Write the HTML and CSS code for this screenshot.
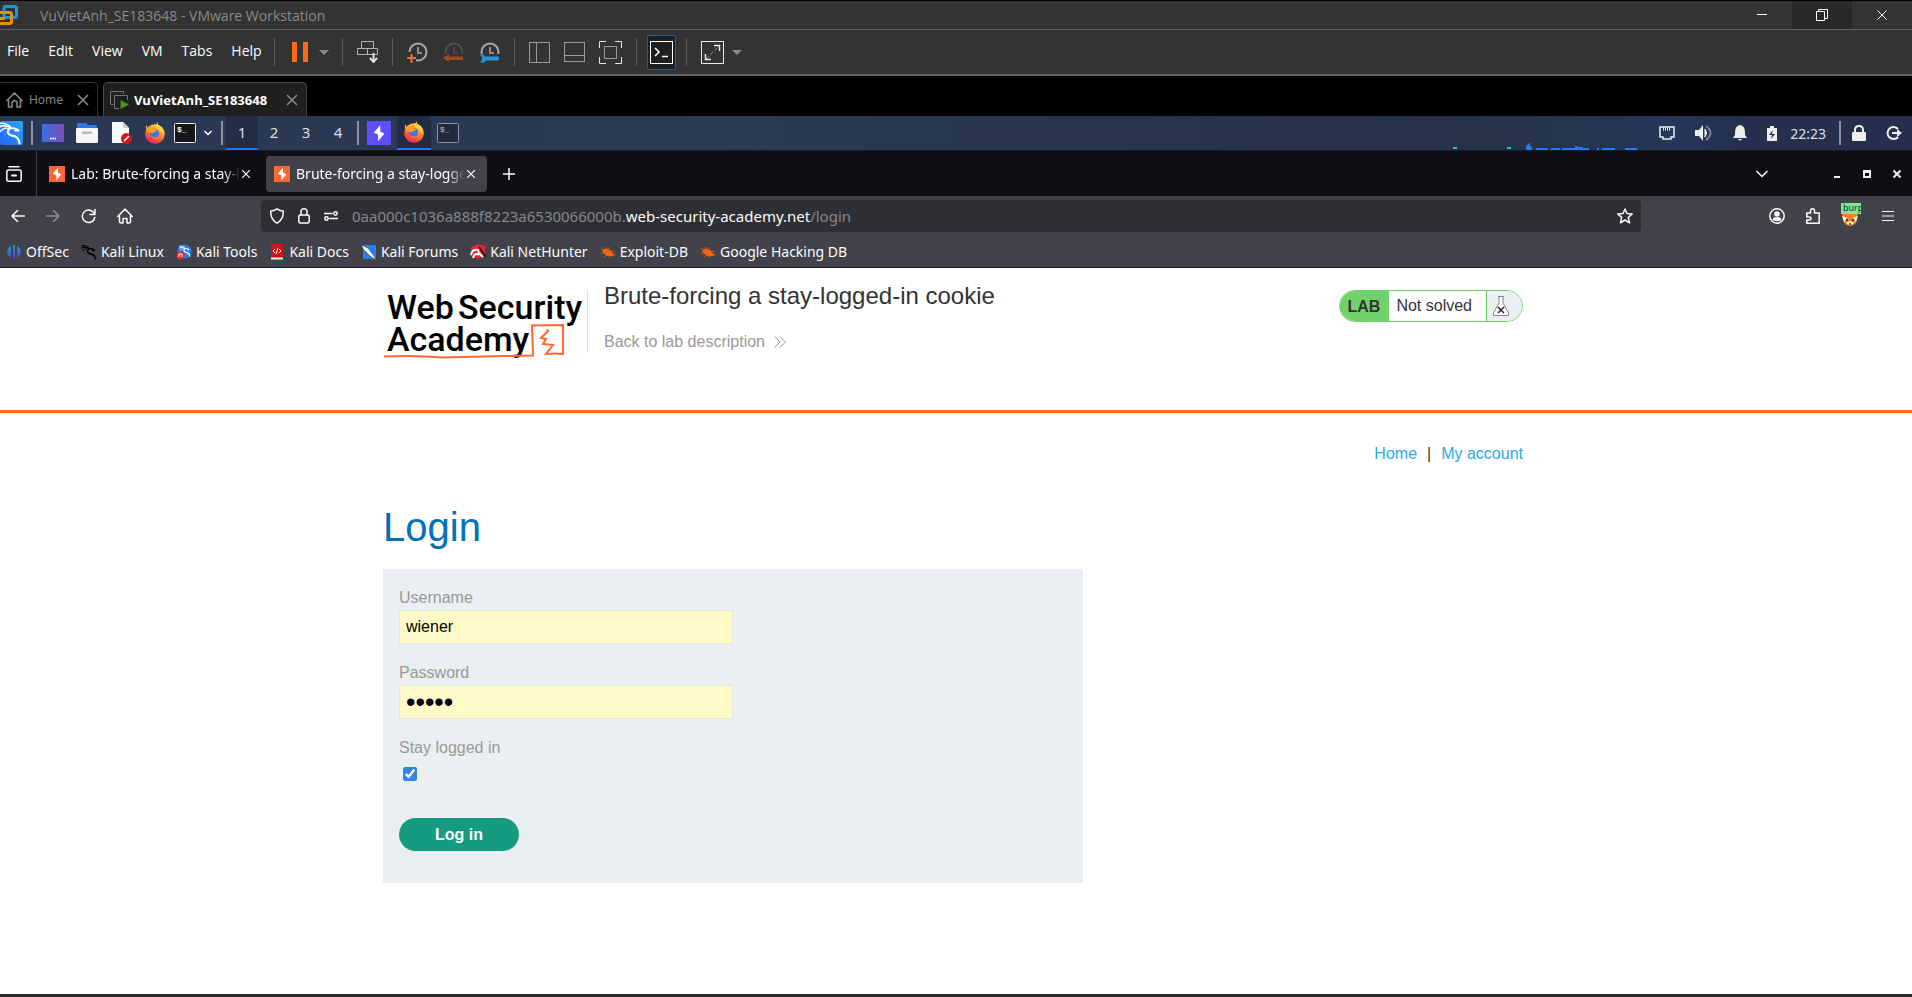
FILE: index.html
```html
<!DOCTYPE html>
<html lang="en">

<head>
    <meta charset="UTF-8">
    <meta name="viewport" content="width=device-width, initial-scale=1.0">
    <title>Brute-forcing a stay-logged-in cookie</title>
    <link rel="stylesheet" href="styles.css">
</head>

<body>
    <!-- Shared icons -->
    <svg class="defs" width="0" height="0" aria-hidden="true">
        <defs>
            <linearGradient id="fox-body" x1="0.8" y1="0" x2="0.3" y2="1">
                <stop offset="0" stop-color="#fff04f" />
                <stop offset="0.4" stop-color="#ff9a2e" />
                <stop offset="0.75" stop-color="#ff4a3c" />
                <stop offset="1" stop-color="#e8236b" />
            </linearGradient>
            <linearGradient id="desk" x1="0" y1="0" x2="1" y2="0">
                <stop offset="0" stop-color="#3a6fe6" />
                <stop offset="1" stop-color="#7b4fb5" />
            </linearGradient>
            <linearGradient id="kali-bg" x1="0" y1="1" x2="1" y2="0">
                <stop offset="0" stop-color="#2767f4" />
                <stop offset="1" stop-color="#25a7ff" />
            </linearGradient>
            <linearGradient id="offsec" x1="0" y1="0" x2="0" y2="1">
                <stop offset="0" stop-color="#12a5b4" />
                <stop offset="1" stop-color="#5a35d6" />
            </linearGradient>
        </defs>
        <symbol id="i-dragon" viewBox="0 0 24 24">
            <g fill="none" stroke="currentColor" stroke-linecap="round" stroke-linejoin="round">
                <path d="M1 2.500C6 1.500 10 3 13 6.500" stroke-width="1.500" />
                <path d="M1 6C5 4 10 4.500 13.500 7.500C16 6.500 18.500 7.500 20.500 9.500L17 9.500" stroke-width="1.800" />
                <path d="M2 10.500C5 7 9 6.500 11.500 8" stroke-width="1.300" />
                <path d="M11.500 7.500C8.500 10.500 10 14 13.500 14.500C18 15.200 21.500 16.500 21.500 22.500" stroke-width="2.200" />
                <path d="M14 14.500C17.500 15 19.500 17 20 19" stroke-width="1.500" />
            </g>
        </symbol>
        <symbol id="i-firefox" viewBox="0 0 22 22">
            <circle cx="11" cy="12" r="9.800" fill="url(#fox-body)" />
            <path d="M14 0C12.500 5 19 6 20.500 12C17 8 15 8 12.500 6C11.500 4 12 2 14 0Z" fill="#ffd43e" />
            <circle cx="10.500" cy="11.500" r="4.700" fill="#4a73e8" />
            <path d="M2 3L4 6C5 5 7 4.800 8 5L11 3.500L10.500 6.500L13 8C13 10 9.500 9.500 9 11C7 12 6 9.500 3.500 10C2 8 1.500 6 2 3Z" fill="#ff9d1e" />
            <path d="M6 12C7 16 13 17 16 13C15 18 8 19 6 12Z" fill="#ff7a33" />
        </symbol>
        <symbol id="i-bolt" viewBox="0 0 16 16">
            <path d="M9 1.500L3.800 7.800L7.300 9.200V14.500L12.300 8.300L9 6.800Z" fill="#fff" />
        </symbol>
        <symbol id="i-burp" viewBox="0 0 16 16">
            <rect width="16" height="16" fill="#ff6633" />
            <path d="M9 1.500L3.800 7.800L7.300 9.200V14.500L12.300 8.300L9 6.800Z" fill="#fff" />
        </symbol>
        <symbol id="i-x" viewBox="0 0 12 12">
            <path d="M1 1L11 11M11 1L1 11" fill="none" stroke="currentColor" stroke-width="1.500" />
        </symbol>
        <symbol id="i-bug" viewBox="0 0 16 16">
            <path d="M2 6C6 3 12 5 14 12C9 13 4 12 2 6Z" fill="#f26411" />
            <path d="M1 4L4 6M5 3L6 5M8 3L9 5M1 9L4 9M4 13L7 11M12 7L15 8M9 14L10 12M13 10L16 11" stroke="#c9541a" fill="none" />
        </symbol>
        <symbol id="i-clock" viewBox="0 0 21 21">
            <circle cx="11" cy="10" r="8.500" fill="none" stroke="currentColor" stroke-width="2" />
            <path d="M11 5V11H15" fill="none" stroke="currentColor" stroke-width="1.500" />
        </symbol>
    </svg>

    <div class="screen">
        <!-- VMware window -->
        <header class="vm-title">
            <svg class="vm-logo" width="18" height="20" viewBox="0 0 18 20">
                <rect x="4" y="1.500" width="12.500" height="11" rx="2" fill="none" stroke="#1d95d3" stroke-width="3" />
                <path d="M0 7.500H9.500Q11.500 7.500 11.500 9.500V16.500Q11.500 18.500 9.500 18.500H0M0 13.500H5" fill="none" stroke="#f38b00" stroke-width="3" />
            </svg>
            <span class="vm-name">VuVietAnh_SE183648 - VMware Workstation</span>
            <button class="win-btn" aria-label="Minimize"><svg width="10" height="10"><path d="M0 4.500H10" stroke="#fff" /></svg></button>
            <button class="win-btn dark" aria-label="Restore"><svg width="12" height="12" fill="none" stroke="#fff"><path d="M0.500 2.500H8.500V11.500H0.500ZM2.500 2.500V0.500H11.500V9.500H8.500" /></svg></button>
            <button class="win-btn" aria-label="Close"><svg width="10" height="10"><path d="M0.500 0.500L9.500 9.500M9.500 0.500L0.500 9.500" stroke="#fff" /></svg></button>
        </header>

        <div class="vm-menu">
            <nav class="menus">
                <button>File</button><button>Edit</button><button>View</button><button>VM</button><button>Tabs</button><button>Help</button>
            </nav>
            <div class="tool-group power">
                <button aria-label="Suspend"><svg width="16" height="20"><path d="M0 0H5V20H0ZM11 0H16V20H11Z" fill="#ff6a13" /></svg></button>
                <button aria-label="Power options"><svg width="10" height="5"><path d="M0 0H10L5 5Z" fill="#8a8a8a" /></svg></button>
            </div>
            <div class="tool-group">
                <button aria-label="Send Ctrl+Alt+Del"><svg width="21" height="22" fill="none" stroke="#b4b4b4"><path d="M4.500 7.500V0.500H16.500V7.500M0.500 7.500H20.500V13.500H0.500ZM10.500 7.500V13.500" /><path d="M16.500 12V20M13 17L16.500 21L20 17" stroke="#ddd" stroke-width="2" /></svg></button>
            </div>
            <div class="tool-group clocks">
                <button class="clock" aria-label="Take snapshot"><svg width="21" height="21"><use href="#i-clock" /><path d="M0 10H5V13H9V21H0Z" fill="#333" /><path d="M0 16H9M4.500 12V21" stroke="#e8703a" stroke-width="2" /></svg></button>
                <button class="clock dim" aria-label="Revert snapshot"><svg width="21" height="21"><use href="#i-clock" /><rect y="12" width="21" height="9" fill="#333" /><path d="M0 16L6 12V14.500H20V18H6V20Z" fill="#a34a22" /></svg></button>
                <button class="clock" aria-label="Manage snapshots"><svg width="21" height="21"><use href="#i-clock" /><rect y="12" width="21" height="9" fill="#333" /><path d="M0 12.500H4L6 14.500H19Q21 16.500 19 18.500H7L5 20.500H0L3 18.500V15Z" fill="#2794dc" /></svg></button>
            </div>
            <div class="tool-group">
                <button aria-label="Show library"><svg width="21" height="21" fill="none" stroke="#9a9a9a"><rect x="0.500" y="0.500" width="20" height="20" /><path d="M7.500 0V21" /></svg></button>
                <button aria-label="Thumbnail bar"><svg width="21" height="20" fill="none" stroke="#9a9a9a"><rect x="0.500" y="0.500" width="20" height="19" /><path d="M0 13.500H21" /></svg></button>
                <button aria-label="Stretch guest"><svg width="23" height="23" fill="none" stroke="#e8e8e8"><path d="M0.500 7V0.500H7M16 0.500H22.500V7M22.500 16V22.500H16M7 22.500H0.500V16" /><rect x="5.500" y="5.500" width="12" height="12" stroke="#999" /></svg></button>
            </div>
            <div class="tool-group tight">
                <button class="pressed" aria-label="Console view"><svg width="23" height="23" fill="none" stroke="#fff"><rect x="0.500" y="0.500" width="22" height="22" /><path d="M5 7L9 11L5 15M12 15.500H18" stroke-width="1.500" /></svg></button>
            </div>
            <div class="tool-group last">
                <button aria-label="Full screen"><svg width="23" height="23" fill="none" stroke="#e8e8e8"><rect x="0.500" y="0.500" width="22" height="22" /><path d="M5 18L18 5" stroke="#999" stroke-dasharray="4 2" /><path d="M13 4.500H18.500V10M4.500 13V18.500H10" stroke-width="1.500" /></svg></button>
                <button aria-label="Full screen options"><svg width="10" height="5"><path d="M0 0H10L5 5Z" fill="#8a8a8a" /></svg></button>
            </div>
        </div>

        <div class="vm-tabs">
            <div class="vm-tab home">
                <svg width="17" height="16" viewBox="0 0 17 16" fill="none" stroke="#8c8c8c" stroke-width="1.500"><path d="M0.500 9L8.500 1L16.500 9M2.500 8V15H6V10Q8.500 7 11 10V15H14.500V8" /></svg>
                <span>Home</span>
                <button aria-label="Close Home"><svg width="12" height="12"><use href="#i-x" /></svg></button>
            </div>
            <div class="vm-tab current">
                <svg width="19" height="18" viewBox="0 0 19 18" fill="none" stroke="#777"><path d="M3.500 13.500H0.500V0.500H13.500V3M9 17.500H4.500V4.500H17.500V9" /><path d="M10.500 9L19 13.500L10.500 18Z" fill="#3f9a12" stroke="none" /></svg>
                <span>VuVietAnh_SE183648</span>
                <button aria-label="Close VuVietAnh_SE183648"><svg width="12" height="12"><use href="#i-x" /></svg></button>
            </div>
        </div>

        <!-- Kali panel -->
        <div class="panel">
            <button class="kali" aria-label="Applications"><svg width="24" height="24"><rect width="23" height="24" rx="2" fill="url(#kali-bg)" /><use href="#i-dragon" x="-2" width="24" height="24" /></svg></button>
            <i class="bar"></i>
            <div class="launchers">
                <button aria-label="Show desktop"><svg width="22" height="18"><rect width="22" height="18" rx="1" fill="url(#desk)" /><path d="M8 14.500H10M10.500 14.500H12.500M13 14.500H14" stroke="#fff" stroke-width="1.500" /></svg></button>
                <button aria-label="Files"><svg width="22" height="20"><path d="M1 0H10L12 2H21V8H1Z" fill="#2f74ea" /><rect y="5" width="22" height="15" rx="1" fill="#f6f6f6" /><rect x="6" y="8.500" width="10" height="2.500" rx="1" fill="#b9b9b9" /></svg></button>
                <button aria-label="Text editor"><svg width="22" height="22"><path d="M2 0H13L19 6V21H2Z" fill="#f8f8f8" /><path d="M13 0V6H19Z" fill="#ccc" /><circle cx="16.500" cy="16.500" r="5.500" fill="#d3151c" /><path d="M14 19L19 14" stroke="#fff" stroke-width="1.500" /></svg></button>
                <button aria-label="Firefox"><svg width="22" height="22"><use href="#i-firefox" /></svg></button>
            </div>
            <div class="term-menu">
                <button aria-label="Terminal"><svg width="22" height="20"><rect x="0.500" y="0.500" width="21" height="19" rx="1" fill="#171717" stroke="#eee" /><text x="3" y="9" class="prompt">$_</text></svg></button>
                <button aria-label="More terminals"><svg width="8" height="6"><path d="M0.500 1L4 4.500L7.500 1" fill="none" stroke="#fff" stroke-width="1.500" /></svg></button>
            </div>
            <i class="bar"></i>
            <div class="spaces">
                <button class="on">1</button><button>2</button><button>3</button><button>4</button>
            </div>
            <i class="bar"></i>
            <div class="tasks">
                <button aria-label="Burp Suite"><svg width="24" height="24"><rect width="24" height="24" fill="#5f50ff" /><use href="#i-bolt" x="2" y="2" width="20" height="20" /></svg></button>
                <button class="on" aria-label="Firefox window"><svg width="22" height="22"><use href="#i-firefox" /></svg></button>
                <button aria-label="Terminal window"><svg width="22" height="20"><rect x="0.500" y="0.500" width="21" height="19" rx="1" fill="#222a3c" stroke="#8d93a0" /><text x="3" y="9" class="prompt faded">$_</text></svg></button>
            </div>
            <svg class="wallpaper" width="187" height="7"><path d="M0 4H4V6H0ZM54 4H58V6H54Z" fill="#17c9c0" /><path d="M73 7V3L75 1L77 0V3L79 4V7ZM83 5H95V7H83ZM98 5H107V7H98ZM109 5H122V3H125V4H130V5H136V7H109ZM144 5H146V7H144ZM149 5H162V7H149ZM172 5H184V7H172Z" fill="#2478f5" /></svg>
            <div class="tray">
                <button aria-label="Network"><svg width="16" height="14" fill="none" stroke="#eee"><path d="M1 1H15V11H12V13H4V11H1Z" stroke-width="1.500" /><path d="M4 3H12" stroke-dasharray="1 1" stroke-width="3" /></svg></button>
                <button aria-label="Volume"><svg width="18" height="16"><path d="M0 5H4L8 0V16L4 11H0Z" fill="#eee" /><path d="M10 4Q13 8 10 12Z" fill="#eee" stroke="#eee" /><path d="M11 1Q20 8 11 15" fill="none" stroke="#76809a" stroke-width="2" /></svg></button>
                <button aria-label="Notifications"><svg width="14" height="16"><path d="M7 0Q12 1 12 7V10L14 13H0L2 10V7Q2 1 7 0ZM5 14H9Q7 17 5 14Z" fill="#eee" /></svg></button>
                <button aria-label="Battery"><svg width="10" height="15"><path d="M0 2H3V0H7V2H10V15H0Z" fill="#eee" /><path d="M6 4L2 9H5L4 13L8 8H5Z" fill="#26314d" /></svg></button>
                <time>22:23</time>
                <i class="bar"></i>
                <button aria-label="Lock screen"><svg width="14" height="16"><rect y="7" width="14" height="9" rx="1" fill="#eee" /><path d="M3 8V5Q3 1 7 1Q11 1 11 5V8" fill="none" stroke="#eee" stroke-width="2" /></svg></button>
                <button aria-label="Log out"><svg width="16" height="14"><path d="M12 3A6 6 0 1 0 12 11" fill="none" stroke="#eee" stroke-width="2" /><path d="M6 6H11V3L16 7L11 11V8H6Z" fill="#eee" /></svg></button>
            </div>
        </div>

        <!-- Browser chrome -->
        <div class="tabstrip">
            <button class="view" aria-label="Firefox View"><svg width="16" height="16" fill="none" stroke="#fbfbfe" stroke-width="1.500" stroke-linecap="round"><path d="M3 0.800H13" /><rect x="0.800" y="4" width="14.400" height="11.200" rx="2" /><path d="M6 9.500H10" stroke-width="2" /></svg></button>
            <div class="tab">
                <svg width="16" height="16"><use href="#i-burp" /></svg>
                <span class="tab-text">Lab: Brute-forcing a stay-logged-in cookie</span>
                <button aria-label="Close tab"><svg width="8" height="8" viewBox="1 1 10 10"><use href="#i-x" width="12" height="12" /></svg></button>
            </div>
            <div class="tab selected">
                <svg width="16" height="16"><use href="#i-burp" /></svg>
                <span class="tab-text">Brute-forcing a stay-logged-in cookie</span>
                <button aria-label="Close tab"><svg width="8" height="8" viewBox="1 1 10 10"><use href="#i-x" width="12" height="12" /></svg></button>
            </div>
            <button class="new-tab" aria-label="New tab"><svg width="12" height="12"><path d="M6 0V12M0 6H12" stroke="#fbfbfe" stroke-width="1.500" /></svg></button>
            <div class="strip-end">
                <button class="all-tabs" aria-label="List all tabs"><svg width="12" height="8"><path d="M0.500 1L6 6.500L11.500 1" fill="none" stroke="#fbfbfe" stroke-width="1.500" /></svg></button>
                <button aria-label="Minimize"><svg width="8" height="8"><path d="M1 7H7" stroke="#eee" stroke-width="2" /></svg></button>
                <button aria-label="Maximize"><svg width="8" height="8"><path d="M1 1H7V7H1Z" fill="none" stroke="#eee" stroke-width="2" /><path d="M0 2H8" stroke="#eee" stroke-width="2" /></svg></button>
                <button aria-label="Close"><svg width="8" height="8"><path d="M0.500 0.500L7.500 7.500M7.500 0.500L0.500 7.500" stroke="#eee" stroke-width="2" /></svg></button>
            </div>
        </div>

        <div class="navbar">
            <div class="nav-left">
                <button aria-label="Back"><svg width="14" height="12" class="line"><path d="M14 6H1M6.500 0.500L1 6L6.500 11.500" /></svg></button>
                <button aria-label="Forward" class="off"><svg width="14" height="12" class="line"><path d="M0 6H13M7.500 0.500L13 6L7.500 11.500" /></svg></button>
                <button aria-label="Reload"><svg width="15" height="15" class="line"><path d="M13.500 5A6.300 6.300 0 1 0 13.800 8.500M14 0.500V5.500H9" /></svg></button>
                <button aria-label="Home page"><svg width="16" height="16" class="line"><path d="M0.800 8.500L8 1L15.200 8.500M2.500 7.500V13.500Q2.500 15 4 15H6V10.500H10V15H12Q13.500 15 13.500 13.500V7.500" /></svg></button>
            </div>
            <div class="urlbar">
                <svg width="14" height="16" class="line"><path d="M7 0.800Q10 2.800 13.200 3Q13.800 11.500 7 15.200Q0.200 11.500 0.800 3Q4 2.800 7 0.800Z" /></svg>
                <svg width="12" height="16" class="line"><rect x="0.800" y="7" width="10.400" height="8" rx="1.500" /><path d="M3 7V4Q3 0.800 6 0.800Q9 0.800 9 4V7" /></svg>
                <svg width="14" height="10" class="line"><path d="M0 2.500H8M6 7.500H14" /><circle cx="11.500" cy="2.500" r="1.700" /><circle cx="2.500" cy="7.500" r="1.700" /></svg>
                <div class="url" role="textbox" contenteditable="true" spellcheck="false" aria-label="Address">0aa000c1036a888f8223a6530066000b.<b>web-security-academy.net</b>/login</div>
                <button aria-label="Bookmark this page"><svg width="16" height="16" class="line"><path d="M8 1L10 5.500L15.200 6L11.300 9.400L12.500 14.800L8 12L3.500 14.800L4.700 9.400L0.800 6L6 5.500Z" /></svg></button>
            </div>
            <div class="nav-right">
                <button aria-label="Account"><svg width="16" height="16" class="line"><circle cx="8" cy="8" r="7.200" /><circle cx="8" cy="6" r="2" fill="#fbfbfe" /><path d="M4.500 11.500Q4.500 10 6 10H10Q11.500 10 11.500 11.500Q8 13.500 4.500 11.500Z" fill="#fbfbfe" /></svg></button>
                <button aria-label="Extensions"><svg width="14" height="16" class="line"><path d="M0.800 15.200V12H3Q5 12 5 10.500Q5 9 3 9H0.800V5H4.500V3Q4.500 0.800 6.500 0.800Q8.500 0.800 8.500 3V5H13.200V15.200Z" /></svg></button>
                <button class="proxy" aria-label="FoxyProxy: burp"><svg width="20" height="22"><path d="M1 9H17L15 18Q9 24 3 18Z" fill="#f0861a" /><path d="M3 17L1 11L6 13ZM15 17L17 11L12 13ZM5 18Q9 22 13 18L9 16Z" fill="#fff3dc" /><path d="M5 15H7M11 15H13M8 19H10" stroke="#222" stroke-width="1.500" /></svg><span>burp</span></button>
                <button aria-label="Menu"><svg width="12" height="12"><path d="M0 1.500H12M0 6H12M0 10.500H12" stroke="#fbfbfe" stroke-width="1.200" /></svg></button>
            </div>
        </div>

        <nav class="bookmarks">
            <a href="#"><svg width="16" height="16"><path d="M5 2V14Q1 12 1 8Q1 4 5 2ZM7 1H9V15H7ZM11 2V14Q15 12 15 8Q15 4 11 2Z" fill="url(#offsec)" /></svg>OffSec</a>
            <a href="#"><svg width="16" height="16" class="black"><use href="#i-dragon" /></svg>Kali Linux</a>
            <a href="#"><svg width="16" height="16" class="white"><circle cx="8.500" cy="7.500" r="7" fill="#2a7bf0" /><use href="#i-dragon" x="3" y="1" width="12" height="12" /><circle cx="4.500" cy="11.500" r="4" fill="#e3282d" /><path d="M3 13V10H6V13" fill="none" stroke="#fff" /></svg>Kali Tools</a>
            <a href="#"><svg width="16" height="16"><path d="M2 0H14V16H2Z" fill="#d7101b" /><path d="M2 14.500H14" stroke="#eee" stroke-width="2" /><path d="M6 5L4 7L6 9M10 5L12 7L10 9M9 4L7 10" fill="none" stroke="#fff" /></svg>Kali Docs</a>
            <a href="#"><svg width="16" height="16"><path d="M2 1H15V15H2Z" fill="#2480f5" /><path d="M0 1L7 4L13 12L15 16L9 12L3 6Z" fill="#fff" stroke="#222" stroke-width="0.500" /></svg>Kali Forums</a>
            <a href="#"><svg width="16" height="16"><path d="M1 3L8 0L15 2V10L8 15L1 12Z" fill="#e92130" /><path d="M1 11Q2 5 8 6Q8 9 13 13M3 14Q5 8 9 11" fill="none" stroke="#fff" stroke-width="2" /><path d="M9 3L16 13" stroke="#111" stroke-width="1.500" /></svg>Kali NetHunter</a>
            <a href="#"><svg width="16" height="16"><use href="#i-bug" /></svg>Exploit-DB</a>
            <a href="#"><svg width="16" height="16"><use href="#i-bug" /></svg>Google Hacking DB</a>
        </nav>

        <!-- Lab page -->
        <main class="page">
            <section class="lab-header">
                <div class="container">
                    <a class="logo" href="#" aria-label="Web Security Academy">
                        <svg width="204" height="76" viewBox="0 0 204 76">
                            <g class="logo-text">
                                <text x="4" y="41">Web</text>
                                <text x="75" y="41">Security</text>
                                <text x="4" y="73">Academy</text>
                            </g>
                            <path d="M1 78.500Q30 77 60 79.500L120 78L150 77.500L149 47.500L180 47L180 76Q172 75 163 76L170 67L160 66L163 61L158 60L165 53L164 51" fill="none" stroke="#ff6633" stroke-width="2" />
                        </svg>
                    </a>
                    <div class="lab-title">
                        <h2>Brute-forcing a stay-logged-in cookie</h2>
                        <a href="#">Back to lab description<svg width="12" height="12"><path d="M0.500 0.500L6 6L0.500 11.500M6 0.500L11.500 6L6 11.500" fill="none" stroke="#999" /></svg></a>
                    </div>
                    <div class="lab-status">
                        <strong>LAB</strong>
                        <span>Not solved</span>
                        <i><svg width="16" height="20" fill="none"><path d="M5 0.500H11M6 0.500V7L0.500 17V19.500H15.500V17L10 7V0.500" fill="#fff" stroke="#888" /><path d="M5 11L11 17M11 11L5 17" stroke="#222" stroke-width="1.500" /></svg></i>
                    </div>
                </div>
            </section>
            <section class="content">
                <div class="container">
                    <nav class="links"><a href="#">Home</a><span>|</span><a href="#">My account</a></nav>
                    <h1>Login</h1>
                    <form class="login">
                        <label for="username">Username</label>
                        <input type="text" id="username" value="wiener">
                        <label for="password">Password</label>
                        <input type="password" id="password" value="peter">
                        <label for="stay">Stay logged in</label>
                        <input type="checkbox" id="stay" checked>
                        <button type="button">Log in</button>
                    </form>
                </div>
            </section>
        </main>
    </div>
</body>

</html>
```
FILE: styles.css
```css
* {
    box-sizing: border-box;
}

body {
    margin: 0;
    background: #000;
    font-family: "Noto Sans", sans-serif;
    color: #fbfbfe;
}

button {
    display: flex;
    align-items: center;
    justify-content: center;
    padding: 0;
    border: none;
    background: none;
    color: inherit;
    font: inherit;
    cursor: pointer;
}

svg {
    display: block;
    flex: none;
}

a {
    color: inherit;
    text-decoration: none;
}

.defs {
    position: absolute;
}

.screen {
    display: flex;
    flex-direction: column;
    min-height: 100vh;
    padding-top: 1px;
    border-bottom: 3px solid #2a2a2a;
}

/* VMware window */
.vm-title {
    display: flex;
    height: 29px;
    align-items: center;
    background: #333;
    border-bottom: 1px solid #5f5f5f;
    font-family: "Open Sans", sans-serif;
    font-size: 14px;
    color: #8a8a8a;
}

.vm-name {
    flex: 1;
    padding-left: 22px;
}

.win-btn {
    width: 60px;
    height: 28px;
}

.win-btn.dark {
    background: #292929;
}

.vm-menu {
    display: flex;
    height: 46px;
    align-items: center;
    background: #333;
    border-bottom: 2px solid #656565;
}

.menus {
    display: flex;
    gap: 19px;
    padding: 0 12px 3px 7px;
    font-family: "Open Sans", sans-serif;
    font-size: 14px;
    color: #fff;
}

.tool-group {
    display: flex;
    height: 28px;
    align-items: center;
    gap: 14px;
    padding: 0 14px;
    border-left: 1px solid #5c5c5c;
}

.tool-group.power {
    gap: 11px;
    padding: 0 13px 0 17px;
}

.tool-group.clocks {
    gap: 15px;
}

.tool-group.tight {
    padding: 0 10px;
}

.tool-group.last {
    gap: 8px;
}

.clock {
    color: #aaa;
}

.clock.dim {
    color: #505050;
}

.pressed {
    width: 29px;
    height: 35px;
    background: #1f1f1f;
    border: 1px solid #1f6099;
    border-radius: 2px;
}

.vm-tabs {
    display: flex;
    height: 40px;
    align-items: flex-end;
    gap: 5px;
    font-family: "Open Sans", sans-serif;
    color: #8c8c8c;
}

.vm-tab {
    display: flex;
    height: 34px;
    align-items: center;
    border: 1px solid #333;
    border-bottom: none;
    border-radius: 0 5px 0 0;
}

.vm-tab.home {
    gap: 6px;
    padding: 0 8px 0 6px;
    border-left: none;
    font-size: 12px;
}

.vm-tab.home button {
    margin-left: 8px;
}

.vm-tab.current {
    gap: 5px;
    padding: 0 8px 0 6px;
    background: #1f1f1f;
    border-color: #484848;
    border-radius: 5px 5px 0 0;
    font-size: 13px;
}

.vm-tab.current span {
    color: #fff;
    font-weight: 700;
}

.vm-tab.current button {
    margin-left: 14px;
}

/* Kali panel */
.panel {
    display: flex;
    height: 35px;
    align-items: center;
    background: linear-gradient(90deg, #2b3854 0%, #2b3954 40%, #27314c 70%, #273349 78%, #26365a 88%, #26304e 91%);
    border-bottom: 1px solid #161b27;
    font-size: 15px;
    color: #dcdfe6;
}

.bar {
    width: 2px;
    height: 24px;
    background: #8b92a3;
}

.kali {
    padding-right: 7px;
    color: #fff;
}

.launchers {
    display: flex;
    align-items: center;
    gap: 12px;
    padding: 0 8px 0 9px;
}

.term-menu {
    display: flex;
    align-items: center;
    gap: 8px;
    margin-right: 9px;
}

.prompt {
    fill: #fff;
    font-family: "Liberation Mono", monospace;
    font-size: 8px;
    font-weight: 700;
}

.prompt.faded {
    fill: #a0a6b4;
}

.spaces {
    display: flex;
    align-self: stretch;
    padding: 0 3px;
}

.spaces button {
    width: 32px;
    border-bottom: 2px solid transparent;
}

.spaces .on,
.tasks .on {
    background: #222c44;
    border-bottom: 2px solid #2276f4;
}

.tasks {
    display: flex;
    align-self: stretch;
    align-items: center;
    gap: 6px;
    padding-left: 8px;
}

.tasks .on {
    align-self: stretch;
    width: 34px;
}

.wallpaper {
    align-self: flex-end;
    margin-left: auto;
}

.tray {
    display: flex;
    align-items: center;
    gap: 20px;
    padding: 0 10px 0 19px;
}

.tray time {
    margin: 0 -7px;
    font-size: 14px;
}

.tray .bar {
    margin-right: -9px;
}

/* Browser */
.tabstrip {
    display: flex;
    height: 45px;
    align-items: center;
    background: #0e0f13;
    font-size: 14px;
}

.view {
    align-self: stretch;
    width: 37px;
    padding-right: 8px;
    border-right: 1px solid #3e3f45;
}

.tab {
    display: flex;
    width: 221px;
    height: 36px;
    align-items: center;
    margin: 0 4px 0 4px;
    padding: 0 12px 0 8px;
    border-radius: 4px;
}

.tab.selected {
    background: #42434a;
    margin-left: 0;
}

.tab-text {
    flex: 1;
    overflow: hidden;
    margin: 0 2px 0 6px;
    white-space: nowrap;
    -webkit-mask-image: linear-gradient(90deg, #000 90%, transparent);
    mask-image: linear-gradient(90deg, #000 90%, transparent);
}

.new-tab {
    margin-left: 12px;
}

.strip-end {
    display: flex;
    align-items: center;
    gap: 22px;
    margin-left: auto;
    padding-right: 11px;
}

.all-tabs {
    margin-right: 43px;
}

.navbar {
    display: flex;
    height: 40px;
    align-items: center;
    background: #42434a;
}

.line {
    fill: none;
    stroke: #fbfbfe;
    stroke-width: 1.5;
    stroke-linecap: round;
    stroke-linejoin: round;
}

.off {
    opacity: 0.4;
}

.nav-left {
    display: flex;
    width: 261px;
    align-items: center;
    gap: 21px;
    padding-left: 11px;
}

.urlbar {
    display: flex;
    flex: 1;
    height: 32px;
    align-items: center;
    gap: 14px;
    padding: 0 8px 0 9px;
    background: #2e2f34;
    border-radius: 4px;
    font-size: 15px;
    color: #85868c;
}

.url {
    flex: 1;
    outline: none;
    white-space: nowrap;
}

.url b {
    color: #fbfbfe;
    font-weight: 400;
}

.nav-right {
    display: flex;
    width: 271px;
    align-items: center;
    justify-content: flex-end;
    gap: 21px;
    padding-right: 18px;
}

.proxy {
    position: relative;
}

.proxy span {
    position: absolute;
    top: -2px;
    left: 0;
    width: 20px;
    height: 11px;
    overflow: hidden;
    padding-left: 2px;
    background: #7ee89a;
    color: #12351d;
    font-size: 9px;
    line-height: 10px;
    text-align: left;
}

.bookmarks {
    display: flex;
    height: 32px;
    align-items: center;
    gap: 12px;
    padding-left: 6px;
    background: #42434a;
    border-bottom: 1px solid #1c1b22;
    font-size: 14px;
}

.bookmarks a {
    display: flex;
    align-items: center;
    gap: 4px;
}

.black {
    color: #000;
}

.white {
    color: #fff;
}

/* Lab page */
.page {
    flex: 1;
    background: #fff;
    color: #333332;
    font-family: "Liberation Sans", Arial, sans-serif;
    font-size: 16px;
}

.container {
    max-width: 1140px;
    margin: 0 auto;
}

.lab-header {
    padding-right: 6px;
    border-bottom: 3px solid #ff6633;
}

.lab-header .container {
    display: flex;
    height: 142px;
    align-items: flex-start;
    padding-top: 10px;
}

.logo svg {
    overflow: visible;
}

.logo-text {
    fill: #000;
    font-family: Roboto, sans-serif;
    font-size: 34px;
    font-weight: 500;
}

.lab-title {
    height: 62px;
    margin-top: 12px;
    padding-left: 16px;
    border-left: 1px solid #e0e0e0;
}

.lab-title h2 {
    margin: -8px 0 23px;
    font-size: 24px;
    font-weight: 400;
    line-height: 28px;
}

.lab-title a {
    display: flex;
    align-items: center;
    gap: 9px;
    color: #999;
}

.lab-status {
    display: flex;
    height: 32px;
    align-items: stretch;
    margin-top: 12px;
    margin-left: auto;
    overflow: hidden;
    border: 1px solid #71d26c;
    border-radius: 16px;
    line-height: 30px;
}

.lab-status strong {
    padding: 1px 9px 0 8px;
    background: #71d26c;
}

.lab-status span {
    padding: 0 14px 0 7px;
}

.lab-status i {
    display: flex;
    width: 36px;
    align-items: center;
    padding-left: 6px;
    background: #eaeff2;
    border-left: 1px solid #71d26c;
}

.content {
    padding: 31px 6px 0 0;
}

.links {
    display: flex;
    justify-content: flex-end;
    gap: 10px;
    line-height: 20px;
}

.links a {
    color: #29abe2;
}

h1 {
    margin: 39px 0 17px;
    color: #0071bc;
    font-size: 40px;
    font-weight: 400;
    line-height: 49px;
}

.login {
    width: 700px;
    max-width: 100%;
    padding: 16px 16px 32px;
    background: #eaeff2;
}

.login label {
    display: block;
    color: #999;
    line-height: 25px;
}

.login input[type="text"],
.login input[type="password"] {
    display: block;
    width: 50%;
    height: 34px;
    margin-bottom: 16px;
    padding: 0 6px;
    background: #fffac8;
    border: 1px solid #e3e6dd;
    font: inherit;
    color: #000;
}

.login input[type="password"] {
    font-size: 27px;
}

.login input[type="checkbox"] {
    display: block;
    width: 14px;
    height: 14px;
    margin: 7px 4px 37px;
    accent-color: #3584e4;
}

.login button {
    width: 120px;
    height: 33px;
    background: #159b80;
    border-radius: 17px;
    color: #fff;
    font-weight: 700;
}
```
